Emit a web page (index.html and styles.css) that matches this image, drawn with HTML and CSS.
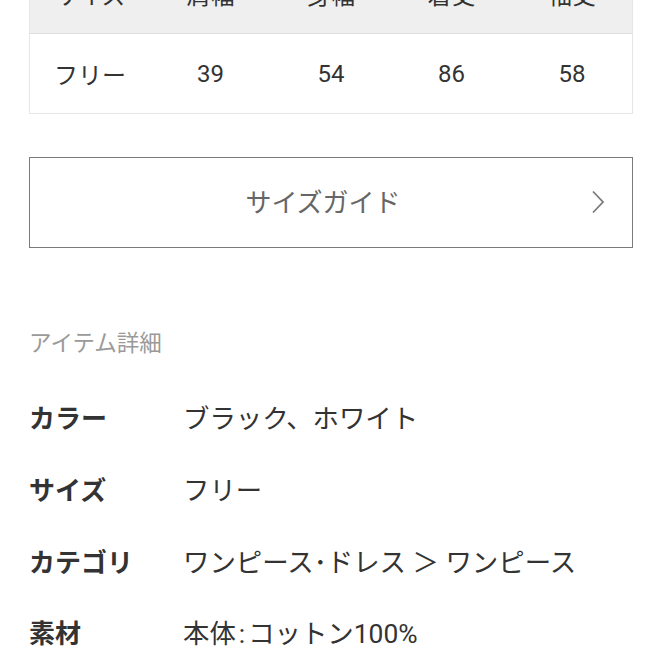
FILE: index.html
```html
<!DOCTYPE html>
<html lang="ja">
<head>
<meta charset="utf-8">
<link rel="stylesheet" href="styles.css">
</head>
<body>
<div class="page">
  <table class="size-table">
    <thead>
      <tr><th>サイズ</th><th>肩幅</th><th>身幅</th><th>着丈</th><th>袖丈</th></tr>
    </thead>
    <tbody>
      <tr><td>フリー</td><td>39</td><td>54</td><td>86</td><td>58</td></tr>
    </tbody>
  </table>

  <a class="guide-btn" href="#">
    <span class="guide-label">サイズガイド</span>
    <svg class="chev" width="14" height="24" viewBox="0 0 14 24"><path d="M2 1.5 L12 12 L2 22.5" fill="none" stroke="#7a7a7a" stroke-width="1.8"/></svg>
  </a>

  <h2 class="section-title">アイテム詳細</h2>

  <dl class="details">
    <dt>カラー</dt><dd>ブラック、ホワイト</dd>
    <dt>サイズ</dt><dd>フリー</dd>
    <dt>カテゴリ</dt><dd>ワンピース･ドレス ＞ ワンピース</dd>
    <dt>素材</dt><dd>本体<span class="colon">:</span>コットン100%</dd>
  </dl>
</div>
</body>
</html>
```

FILE: styles.css
```css
* { box-sizing: border-box; }
html, body { margin: 0; padding: 0; background: #fff; }
body {
  font-family: Roboto, "Noto Sans CJK JP", "Noto Sans", sans-serif;
  color: #333;
}
.page {
  padding: 0 29px;
}
.size-table {
  width: 604px;
  margin-top: -47px;
  border-collapse: collapse;
  table-layout: fixed;
  border: 1px solid #e6e6e6;
}
.size-table th,
.size-table td {
  height: 80px;
  text-align: center;
  font-size: 24px;
  font-weight: normal;
  color: #333;
  padding: 0;
}
.size-table th {
  background: #efefef;
  border-bottom: 1px solid #e0e0e0;
}
.guide-btn {
  margin-top: 43px;
  height: 91px;
  padding-right: 16px;
  border: 1.5px solid #7a7a7a;
  display: flex;
  align-items: center;
  justify-content: center;
  position: relative;
  text-decoration: none;
}
.guide-label {
  font-size: 26px;
  line-height: 1;
  margin-top: 0;
  color: #666;
}
.chev {
  position: absolute;
  right: 27px;
  top: 32px;
}
.section-title {
  margin: 79px 0 0;
  font-size: 22.5px;
  line-height: 32px;
  font-weight: normal;
  color: #9a9a9a;
}
.details {
  margin: 22px 0 0;
  display: grid;
  grid-template-columns: 154px 1fr;
  grid-auto-rows: 71.7px;
  align-items: center;
}
.details dt {
  font-size: 26px;
  font-weight: bold;
  color: #333;
}
.details dd {
  margin: 0;
  font-size: 26.4px;
  color: #333;
}
.colon {
  margin: 0 3px;
}
```
